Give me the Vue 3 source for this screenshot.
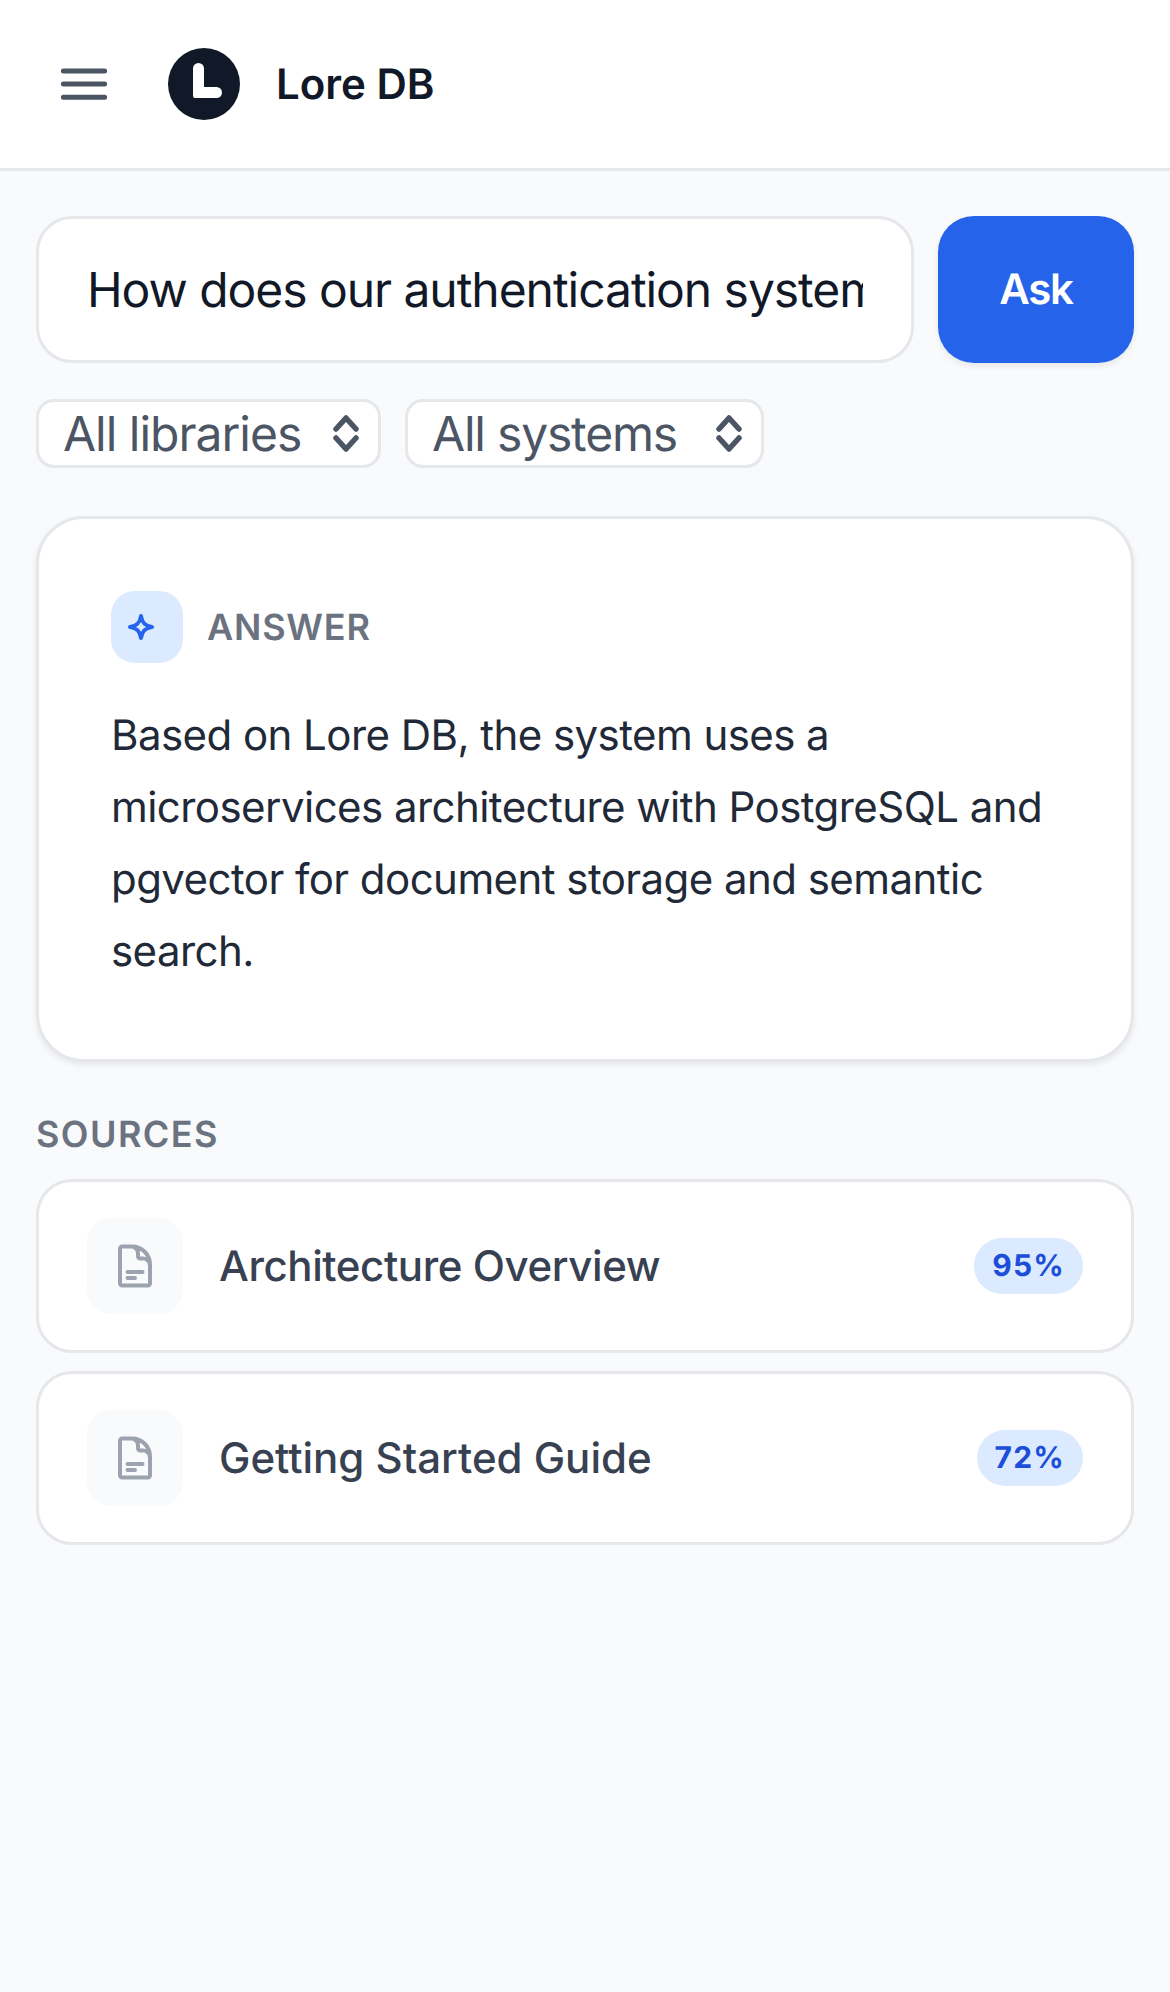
<template>
  <div class="page">
    <header class="topbar">
      <button class="menu-btn" type="button" aria-label="Menu">
        <svg viewBox="0 0 24 24" fill="none" stroke="#4b5563" stroke-width="2" stroke-linecap="round">
          <path d="M3.75 6.75h16.5M3.75 12h16.5M3.75 17.25h16.5" />
        </svg>
      </button>
      <svg class="logo" viewBox="0 0 72 72">
        <circle cx="36" cy="36" r="36" fill="#111827" />
        <path d="M25 20.5a5.5 5.5 0 0 1 11 0V39h12.5a5.5 5.5 0 0 1 0 11H27a2 2 0 0 1-2-2Z" fill="#fff" />
      </svg>
      <span class="brand">Lore DB</span>
    </header>

    <main class="content">
      <div class="search-row">
        <input v-model="question" class="search-input" type="text" />
        <button class="ask-btn" type="button">Ask</button>
      </div>

      <div class="filters">
        <div v-for="f in filters" :key="f" class="filter">
          <span>{{ f }}</span>
          <svg viewBox="0 0 26 37" fill="none" stroke="#4b5563" stroke-width="5.5" stroke-linecap="round" stroke-linejoin="round">
            <path d="M3 14 13 3l10 11M3 23l10 11 10-11" />
          </svg>
        </div>
      </div>

      <section class="answer-card">
        <div class="answer-head">
          <div class="answer-icon">
            <svg viewBox="0 0 28 28" fill="none" stroke="#2563eb" stroke-width="4" stroke-linejoin="round">
              <path d="M14 3c1 7 4 10 11 11-7 1-10 4-11 11-1-7-4-10-11-11 7-1 10-4 11-11Z" />
            </svg>
          </div>
          <span class="section-label answer-label">ANSWER</span>
        </div>
        <p class="answer-text">
          Based on Lore DB, the system uses a microservices architecture with PostgreSQL and pgvector for document storage and semantic search.
        </p>
      </section>

      <h2 class="section-label sources-label">SOURCES</h2>
      <div class="sources">
        <div v-for="s in sources" :key="s.title" class="source">
          <div class="doc-icon">
            <svg viewBox="0 0 24 24" fill="none" stroke="#9ca3af" stroke-width="2" stroke-linecap="round" stroke-linejoin="round">
              <path d="M19.5 14.25v-2.625a3.375 3.375 0 0 0-3.375-3.375h-1.5A1.125 1.125 0 0 1 13.5 7.125v-1.5a3.375 3.375 0 0 0-3.375-3.375H8.25m0 12.75h7.5m-7.5 3H12M10.5 2.25H5.625c-.621 0-1.125.504-1.125 1.125v17.25c0 .621.504 1.125 1.125 1.125h12.75c.621 0 1.125-.504 1.125-1.125V11.25a9 9 0 0 0-9-9Z" />
            </svg>
          </div>
          <span class="source-title">{{ s.title }}</span>
          <span class="score">{{ s.score }}%</span>
        </div>
      </div>
    </main>
  </div>
</template>

<script setup>
import { ref } from 'vue';

const question = ref('How does our authentication system work?');
const filters = ['All libraries', 'All systems'];
const sources = [
  { title: 'Architecture Overview', score: 95 },
  { title: 'Getting Started Guide', score: 72 },
];
</script>

<style scoped>
.page {
  min-height: 1992px;
  background: #f9fafb;
  font-family: Inter, "Liberation Sans", sans-serif;
  color: #111827;
  text-rendering: geometricPrecision;
}

.topbar {
  display: flex;
  align-items: center;
  gap: 36px;
  height: 171px;
  padding: 0 36px;
  box-sizing: border-box;
  background: #fff;
  border-bottom: 3px solid #e5e7eb;
}

.menu-btn {
  padding: 18px;
  border: 0;
  background: none;
  display: flex;
}

.menu-btn svg {
  width: 60px;
  height: 60px;
}

.logo {
  width: 72px;
  height: 72px;
}

.brand {
  font-size: 42px;
  font-weight: 600;
}

.content {
  padding: 45px 36px 0;
}

.search-row {
  display: flex;
  gap: 24px;
}

.search-input {
  flex: 1;
  min-width: 0;
  height: 147px;
  box-sizing: border-box;
  padding: 0 48px;
  border: 3px solid #e5e7eb;
  border-radius: 36px;
  background: #fff;
  color: #111827;
  font: 400 48px Inter, sans-serif;
  letter-spacing: -1.05px;
  text-rendering: geometricPrecision;
  outline: none;
}

.ask-btn {
  width: 196px;
  border: 0;
  border-radius: 36px;
  background: #2563eb;
  color: #fff;
  font: 600 42px Inter, sans-serif;
  letter-spacing: -1.2px;
  text-rendering: geometricPrecision;
  box-shadow: 0 3px 6px rgba(0, 0, 0, 0.08);
}

.filters {
  display: flex;
  gap: 24px;
  margin-top: 36px;
}

.filter {
  display: flex;
  align-items: center;
  justify-content: space-between;
  width: 345px;
  height: 69px;
  box-sizing: border-box;
  padding: 0 19px 0 24px;
  border: 3px solid #e5e7eb;
  border-radius: 18px;
  background: #fff;
  color: #4b5563;
  font-size: 48px;
  letter-spacing: -1px;
}

.filter:nth-child(2) {
  width: 359px;
  letter-spacing: -1.2px;
}

.filter svg {
  width: 26px;
  height: 37px;
}

.answer-card {
  margin-top: 48px;
  padding: 72px 72px 71px;
  border: 3px solid #e5e7eb;
  border-radius: 48px;
  background: #fff;
  box-shadow: 0 3px 6px rgba(0, 0, 0, 0.08);
}

.answer-head {
  display: flex;
  align-items: center;
  gap: 24px;
  margin-bottom: 37px;
}

.answer-icon {
  width: 72px;
  height: 72px;
  border-radius: 24px;
  background: #dbeafe;
  display: flex;
  align-items: center;
  padding-left: 16px;
  box-sizing: border-box;
}

.answer-icon svg {
  width: 28px;
  height: 28px;
}

.section-label {
  margin: 0;
  font-size: 36px;
  font-weight: 600;
  letter-spacing: 1.44px;
  color: #6b7280;
}

.answer-label {
  letter-spacing: 0.8px;
}

.answer-text {
  margin: 0;
  font-size: 42px;
  line-height: 72px;
  letter-spacing: -0.55px;
  color: #1f2937;
}

.sources-label {
  margin-top: 48px;
  line-height: 48px;
}

.sources {
  display: flex;
  flex-direction: column;
  gap: 18px;
  margin-top: 21px;
}

.source {
  display: flex;
  align-items: center;
  gap: 36px;
  padding: 36px 48px;
  border: 3px solid #e5e7eb;
  border-radius: 36px;
  background: #fff;
}

.doc-icon {
  width: 96px;
  height: 96px;
  border-radius: 24px;
  background: #f9fafb;
  display: flex;
  align-items: center;
  justify-content: center;
}

.doc-icon svg {
  width: 48px;
  height: 48px;
}

.source-title {
  flex: 1;
  font-size: 42px;
  font-weight: 500;
  color: #374151;
}

.source:first-child .source-title {
  letter-spacing: -0.4px;
}

.score {
  padding: 10px 18px;
  border-radius: 999px;
  background: #dbeafe;
  color: #1d4ed8;
  font-size: 30px;
  font-weight: 700;
  letter-spacing: 1.2px;
}
</style>

<style>
html,
body {
  background: #f9fafb;
}
</style>
